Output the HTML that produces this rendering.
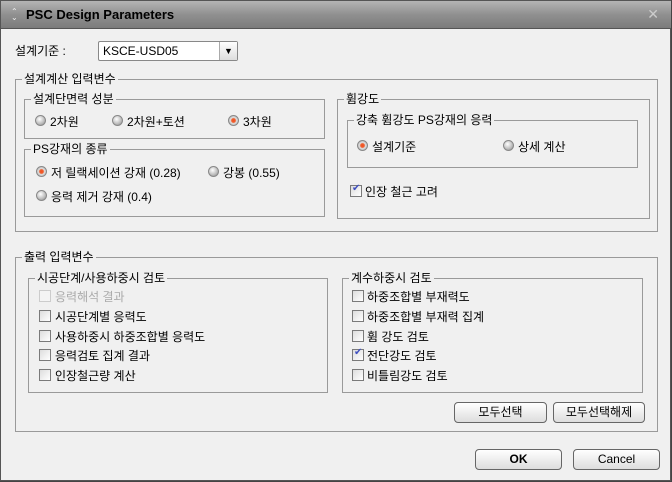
<!DOCTYPE html>
<html><head><meta charset="utf-8"><style>
*{box-sizing:border-box;margin:0;padding:0}
body{width:672px;height:482px;background:#444;font-family:"Liberation Sans","Noto Sans CJK KR",sans-serif;font-size:12px;color:#000;position:relative;overflow:hidden}
.win{position:absolute;left:0;top:0;width:671px;height:481px;background:#f0f0f0;border:1px solid #555}
.title{position:absolute;left:0;top:0;width:670px;height:28px;background:linear-gradient(#b4b4b4,#909090 50%,#7c7c7c);border-bottom:1px solid #555}
.title b{position:absolute;left:25px;top:6px;font-size:13px;color:#000}
.title .ic{position:absolute;left:10px;top:8px;font-size:8px;color:#eee;line-height:6px}
.title .x{position:absolute;right:12px;top:5px;font-size:14px;color:#ccc}
.a{position:absolute;white-space:nowrap}
.g{position:absolute;border:1px solid #9a9a9a}
.g>span{position:absolute;top:-8px;left:6px;background:#f0f0f0;padding:0 2px;line-height:14px}
.combo{position:absolute;left:97px;top:40px;width:140px;height:20px;border:1px solid #888;background:#fff;border-radius:2px}
.combo span{position:absolute;left:4px;top:2px}
.combo i{position:absolute;right:0;top:0;width:18px;height:18px;border-left:1px solid #aaa;background:linear-gradient(#fff,#ddd);font-style:normal;font-size:9px;text-align:center;line-height:18px}
.r{position:absolute;width:11px;height:11px;border-radius:50%;background:radial-gradient(circle at 40% 35%,#fff,#bbb 60%,#888);border:1px solid #888}
.r.on{background:radial-gradient(circle,#f05020 0,#f06030 30%,#ddd 45%,#aaa)}
.c{position:absolute;width:12px;height:12px;border:1px solid #7a7a7a;background:linear-gradient(135deg,#ddd,#fff)}
.c.dis{border-color:#ccc;background:#f4f4f4}
.c.on::after{content:"✔";position:absolute;left:1px;top:-3px;font-size:10px;color:#4050c0}
.btn{position:absolute;border:1px solid #666;border-radius:4px;background:linear-gradient(#fff,#ddd);text-align:center;line-height:18px}
</style></head><body><div class="win">
<div class="title"><div class="ic">⌃<br>⌄</div><b>PSC Design Parameters</b><div class="x">✕</div></div>
<div class="a" style="left:14px;top:41px">설계기준 :</div>
<div class="combo"><span>KSCE-USD05</span><i>▼</i></div>

<div class="g" style="left:14px;top:78px;width:643px;height:153px"><span>설계계산 입력변수</span></div>
<div class="g" style="left:23px;top:98px;width:301px;height:40px"><span>설계단면력 성분</span></div>
<div class="r" style="left:34px;top:114px"></div><div class="a" style="left:49px;top:112px">2차원</div>
<div class="r" style="left:111px;top:114px"></div><div class="a" style="left:126px;top:112px">2차원+토션</div>
<div class="r on" style="left:227px;top:114px"></div><div class="a" style="left:242px;top:112px">3차원</div>

<div class="g" style="left:23px;top:148px;width:301px;height:68px"><span>PS강재의 종류</span></div>
<div class="r on" style="left:35px;top:165px"></div><div class="a" style="left:50px;top:163px">저 릴랙세이션 강재 (0.28)</div>
<div class="r" style="left:207px;top:165px"></div><div class="a" style="left:222px;top:163px">강봉 (0.55)</div>
<div class="r" style="left:35px;top:189px"></div><div class="a" style="left:50px;top:187px">응력 제거 강재 (0.4)</div>

<div class="g" style="left:336px;top:98px;width:313px;height:120px"><span>휨강도</span></div>
<div class="g" style="left:346px;top:119px;width:291px;height:48px"><span>강축 휨강도 PS강재의 응력</span></div>
<div class="r on" style="left:356px;top:139px"></div><div class="a" style="left:371px;top:137px">설계기준</div>
<div class="r" style="left:502px;top:139px"></div><div class="a" style="left:517px;top:137px">상세 계산</div>
<div class="c on" style="left:349px;top:184px"></div><div class="a" style="left:364px;top:182px">인장 철근 고려</div>

<div class="g" style="left:14px;top:256px;width:643px;height:175px"><span>출력 입력변수</span></div>
<div class="g" style="left:27px;top:277px;width:300px;height:115px"><span>시공단계/사용하중시 검토</span></div>
<div class="c dis" style="left:38px;top:289px"></div><div class="a" style="left:54px;top:287px;color:#aaa">응력해석 결과</div>
<div class="c" style="left:38px;top:309px"></div><div class="a" style="left:54px;top:307px">시공단계별 응력도</div>
<div class="c" style="left:38px;top:329px"></div><div class="a" style="left:54px;top:327px">사용하중시 하중조합별 응력도</div>
<div class="c" style="left:38px;top:348px"></div><div class="a" style="left:54px;top:346px">응력검토 집계 결과</div>
<div class="c" style="left:38px;top:368px"></div><div class="a" style="left:54px;top:366px">인장철근량 계산</div>

<div class="g" style="left:341px;top:277px;width:301px;height:115px"><span>계수하중시 검토</span></div>
<div class="c" style="left:351px;top:289px"></div><div class="a" style="left:366px;top:287px">하중조합별 부재력도</div>
<div class="c" style="left:351px;top:309px"></div><div class="a" style="left:366px;top:307px">하중조합별 부재력 집계</div>
<div class="c" style="left:351px;top:329px"></div><div class="a" style="left:366px;top:327px">휨 강도 검토</div>
<div class="c on" style="left:351px;top:348px"></div><div class="a" style="left:366px;top:346px">전단강도 검토</div>
<div class="c" style="left:351px;top:368px"></div><div class="a" style="left:366px;top:366px">비틀림강도 검토</div>

<div class="btn" style="left:453px;top:401px;width:93px;height:21px">모두선택</div>
<div class="btn" style="left:552px;top:401px;width:92px;height:21px">모두선택해제</div>
<div class="btn" style="left:474px;top:448px;width:87px;height:21px;font-weight:bold">OK</div>
<div class="btn" style="left:572px;top:448px;width:87px;height:21px">Cancel</div>
</div></body></html>
